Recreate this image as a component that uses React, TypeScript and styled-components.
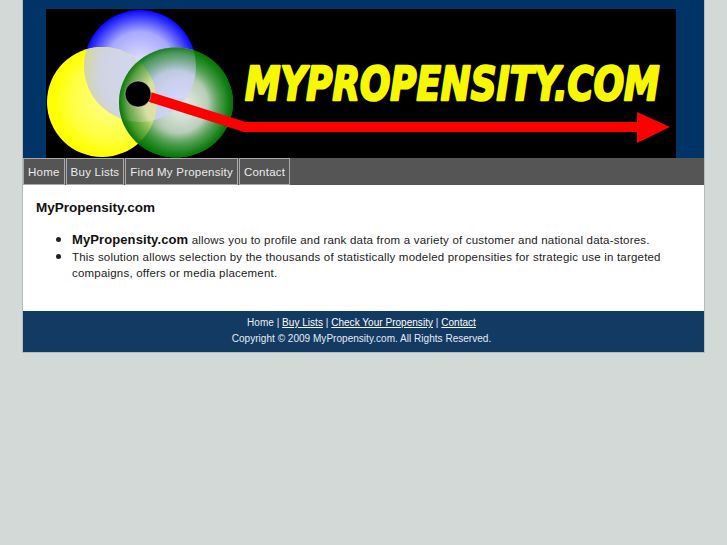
import * as React from "react";
import styled, { createGlobalStyle } from "styled-components";

const GlobalStyle = createGlobalStyle`
  html, body {
    margin: 0;
    padding: 0;
    background: #d3d9d7;
    font-family: "Liberation Sans", Arial, sans-serif;
  }
`;

const Wrapper = styled.div`
  width: 681px;
  margin-left: 22px;
  border: 1px solid #b4bcbc;
  border-top: 0;
  background: #ffffff;
`;

const Header = styled.header`
  background: #003366;
  padding: 9px 28px 0 23px;
  height: 149px;
`;

const Nav = styled.nav`
  display: flex;
  gap: 1px;
  height: 27px;
  background: #555555;
`;

const NavLink = styled.a`
  display: flex;
  align-items: center;
  padding: 0 4px;
  border: 1px solid #a9a9a9;
  color: #ececec;
  font-size: 11.5px;
  letter-spacing: 0.23px;
`;

const Content = styled.main`
  padding: 15px 13px 0;
  height: 111px;
  color: #222222;
  font-size: 11.5px;
  line-height: 16px;
`;

const Title = styled.h1`
  margin: 0 0 15px;
  font-size: 13.5px;
  line-height: 16px;
  color: #111111;
`;

const List = styled.ul`
  margin: 0;
  padding: 0 0 0 36px;
  letter-spacing: 0.2px;

  li::marker {
    font-size: 16px;
  }
`;

const Strong = styled.strong`
  font-size: 13px;
  letter-spacing: 0.1px;
  color: #111111;
`;

const Footer = styled.footer`
  height: 41px;
  padding: 4px 4px 0 0;
  box-sizing: border-box;
  background: #133a63;
  color: #e8ecf0;
  font-size: 10px;
  letter-spacing: 0.03px;
  line-height: 16px;
  text-align: center;
`;

const FooterLink = styled.a`
  color: #ffffff;
  text-decoration: underline;
`;

function Logo() {
  return (
    <svg width="630" height="149" viewBox="46 9 630 149" style={{ display: "block" }}>
      <defs>
        <radialGradient id="blue" cx="140" cy="66" r="57" gradientUnits="userSpaceOnUse">
          <stop offset="0" stopColor="#e8e8ff" />
          <stop offset="0.6" stopColor="#a8a8ff" />
          <stop offset="1" stopColor="#0000ff" />
        </radialGradient>
        <radialGradient id="yellow" cx="110" cy="100" r="56" gradientUnits="userSpaceOnUse">
          <stop offset="0" stopColor="#ffff90" />
          <stop offset="0.7" stopColor="#ffff40" />
          <stop offset="1" stopColor="#ffff00" />
        </radialGradient>
        <radialGradient id="mix" cx="145" cy="75" r="62" gradientUnits="userSpaceOnUse">
          <stop offset="0" stopColor="#d4d8f6" />
          <stop offset="0.75" stopColor="#d0d4e0" />
          <stop offset="1" stopColor="#d4d6a0" />
        </radialGradient>
        <radialGradient id="green" cx="182" cy="106" r="60" gradientUnits="userSpaceOnUse">
          <stop offset="0" stopColor="#ecf0ec" />
          <stop offset="0.45" stopColor="#b8ccb8" />
          <stop offset="0.8" stopColor="#3e9a3e" />
          <stop offset="1" stopColor="#008000" />
        </radialGradient>
        <radialGradient id="rim" cx="176" cy="102" r="57" gradientUnits="userSpaceOnUse">
          <stop offset="0.55" stopColor="#0a7a0a" stopOpacity="0" />
          <stop offset="0.85" stopColor="#0a7a0a" stopOpacity="0.55" />
          <stop offset="1" stopColor="#007000" stopOpacity="0.95" />
        </radialGradient>
        <clipPath id="blueClip">
          <circle cx="140" cy="66" r="56" />
        </clipPath>
        <clipPath id="greenClip">
          <ellipse cx="176" cy="102.5" rx="57" ry="55" />
        </clipPath>
      </defs>
      <rect x="46" y="9" width="630" height="149" fill="#000000" />
      <circle cx="140" cy="66" r="56" fill="url(#blue)" />
      <circle cx="102" cy="102" r="55" fill="url(#yellow)" />
      <circle cx="102" cy="102" r="55" fill="url(#mix)" clipPath="url(#blueClip)" />
      <g clipPath="url(#greenClip)">
        <rect x="119" y="47" width="115" height="111" fill="url(#green)" />
        <circle cx="140" cy="66" r="56" fill="#d0d0ff" opacity="0.75" />
        <circle cx="102" cy="102" r="55" fill="#f0f070" opacity="0.55" />
        <rect x="119" y="47" width="115" height="111" fill="url(#rim)" />
      </g>
      <path d="M150 97 L245 127 L640 127" fill="none" stroke="#ff0000" strokeWidth="10" />
      <polygon points="637,112 670,127 637,143" fill="#ff0000" />
      <circle cx="138" cy="94" r="13" fill="#000000" stroke="#ffffff" strokeOpacity="0.5" strokeWidth="0.8" />
      <text
        transform="translate(245 100) scale(0.776 1)"
        fontFamily="'DejaVu Sans', sans-serif"
        fontWeight="700"
        fontStyle="italic"
        fontSize="46"
        fill="#f7f700"
        stroke="#f7f700"
        strokeWidth="2.5"
        strokeLinejoin="round"
      >
        MYPROPENSITY.COM
      </text>
    </svg>
  );
}

export default function App() {
  return (
    <>
      <GlobalStyle />
      <Wrapper>
        <Header>
          <Logo />
        </Header>
        <Nav>
          <NavLink>Home</NavLink>
          <NavLink>Buy Lists</NavLink>
          <NavLink>Find My Propensity</NavLink>
          <NavLink>Contact</NavLink>
        </Nav>
        <Content>
          <Title>MyPropensity.com</Title>
          <List>
            <li>
              <Strong>MyPropensity.com</Strong> allows you to profile and rank data from a variety of
              customer and national data-stores.
            </li>
            <li>
              This solution allows selection by the thousands of statistically modeled propensities
              for strategic use in targeted compaigns, offers or media placement.
            </li>
          </List>
        </Content>
        <Footer>
          <div>
            Home | <FooterLink>Buy Lists</FooterLink> | <FooterLink>Check Your Propensity</FooterLink> |{" "}
            <FooterLink>Contact</FooterLink>
          </div>
          <div>Copyright © 2009 MyPropensity.com. All Rights Reserved.</div>
        </Footer>
      </Wrapper>
    </>
  );
}
